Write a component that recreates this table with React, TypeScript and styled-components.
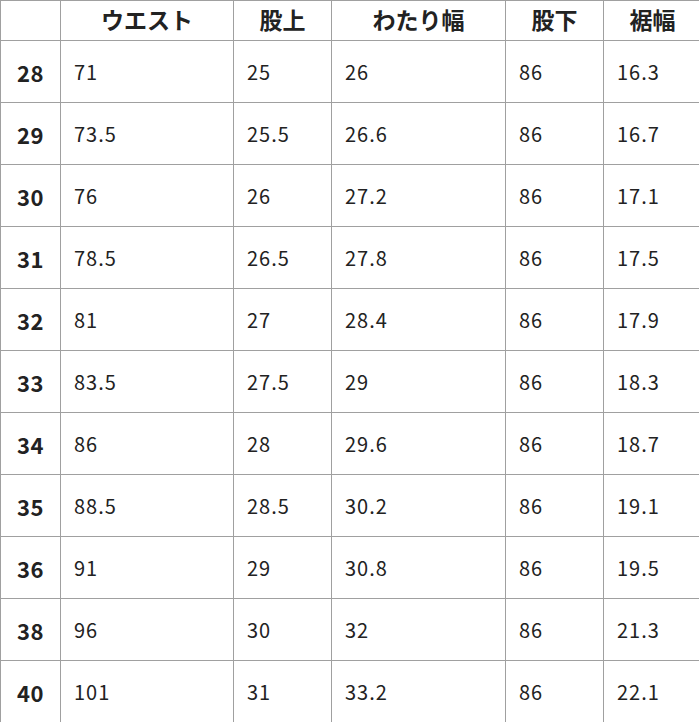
import React from "react";
import styled, { createGlobalStyle } from "styled-components";

const Global = createGlobalStyle`
  html, body { margin: 0; padding: 0; background: #fff; overflow: hidden; }
  body { font-family: "Noto Sans CJK JP", "Noto Sans", sans-serif; color: #222; }
`;

const Table = styled.table`
  border-collapse: collapse;
  table-layout: fixed;
  width: 701px;
`;

const Col = styled.col<{ $w: number }>`
  width: ${(p) => p.$w}px;
`;

const HeadCell = styled.th`
  height: 37px;
  padding: 0 0 2px;
  border: 1px solid #a0a0a0;
  font-size: 23px;
  font-weight: 700;
  text-align: center;
  vertical-align: middle;
  color: #222;
  line-height: 1;
`;

const SizeCell = styled.th`
  height: 61px;
  padding: 0;
  border: 1px solid #a0a0a0;
  font-size: 22px;
  font-weight: 700;
  letter-spacing: 0.5px;
  text-align: center;
  vertical-align: middle;
  color: #222;
`;

const Cell = styled.td`
  height: 61px;
  padding: 0 0 0 13px;
  border: 1px solid #a0a0a0;
  font-size: 20px;
  font-weight: 400;
  letter-spacing: 1px;
  text-align: left;
  vertical-align: middle;
  color: #222;
`;

const headers = ["", "ウエスト", "股上", "わたり幅", "股下", "裾幅"];
const widths = [60, 173, 98, 174, 98, 98];

const rows: string[][] = [
  ["28", "71", "25", "26", "86", "16.3"],
  ["29", "73.5", "25.5", "26.6", "86", "16.7"],
  ["30", "76", "26", "27.2", "86", "17.1"],
  ["31", "78.5", "26.5", "27.8", "86", "17.5"],
  ["32", "81", "27", "28.4", "86", "17.9"],
  ["33", "83.5", "27.5", "29", "86", "18.3"],
  ["34", "86", "28", "29.6", "86", "18.7"],
  ["35", "88.5", "28.5", "30.2", "86", "19.1"],
  ["36", "91", "29", "30.8", "86", "19.5"],
  ["38", "96", "30", "32", "86", "21.3"],
  ["40", "101", "31", "33.2", "86", "22.1"],
];

export default function App() {
  return (
    <>
      <Global />
      <Table>
        <colgroup>
          {widths.map((w, i) => (
            <Col key={i} $w={w} />
          ))}
        </colgroup>
        <thead>
          <tr>
            {headers.map((h, i) => (
              <HeadCell key={i}>{h}</HeadCell>
            ))}
          </tr>
        </thead>
        <tbody>
          {rows.map((r) => (
            <tr key={r[0]}>
              <SizeCell>{r[0]}</SizeCell>
              {r.slice(1).map((v, i) => (
                <Cell key={i}>{v}</Cell>
              ))}
            </tr>
          ))}
        </tbody>
      </Table>
    </>
  );
}
